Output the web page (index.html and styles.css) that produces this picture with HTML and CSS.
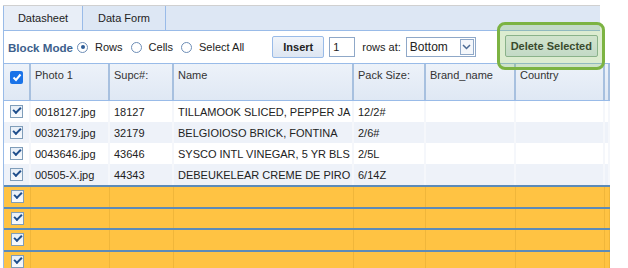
FILE: index.html
```html
<!DOCTYPE html>
<html>
<head>
<meta charset="utf-8">
<link rel="stylesheet" href="styles.css">
</head>
<body>
<div class="panel">
  <div class="tabs">
    <div class="tab active">Datasheet</div>
    <div class="tab">Data Form</div>
  </div>
  <div class="toolbar">
    <span class="mode">Block Mode</span>
    <label class="radio"><span class="rb on"></span>Rows</label>
    <label class="radio"><span class="rb"></span>Cells</label>
    <label class="radio"><span class="rb"></span>Select All</label>
    <button class="btn insert">Insert</button>
    <span class="num">1</span>
    <span class="lbl">rows at:</span>
    <span class="sel">Bottom<span class="arrow"><svg width="9" height="6" viewBox="0 0 9 6"><path d="M1 1 L4.5 4.5 L8 1" fill="none" stroke="#4a6a94" stroke-width="1.5"/></svg></span></span>
    <button class="btn del">Delete Selected</button>
  </div>
  <div class="grid">
    <div class="row head">
      <div class="c ck"><span class="hcb"><svg width="10" height="9" viewBox="0 0 10 9"><path d="M1.5 4.5 L4 7 L8.5 1.5" fill="none" stroke="#fff" stroke-width="2"/></svg></span></div>
      <div class="c photo">Photo 1</div>
      <div class="c supc">Supc#:</div>
      <div class="c name">Name</div>
      <div class="c pack">Pack Size:</div>
      <div class="c brand">Brand_name</div>
      <div class="c country">Country</div>
      <div class="c extra"></div>
    </div>
    <div class="row">
      <div class="c ck"><span class="cb"></span></div>
      <div class="c photo">0018127.jpg</div>
      <div class="c supc">18127</div>
      <div class="c name">TILLAMOOK SLICED, PEPPER JA</div>
      <div class="c pack">12/2#</div>
      <div class="c brand"></div>
      <div class="c country"></div>
      <div class="c extra"></div>
    </div>
    <div class="row alt">
      <div class="c ck"><span class="cb"></span></div>
      <div class="c photo">0032179.jpg</div>
      <div class="c supc">32179</div>
      <div class="c name">BELGIOIOSO BRICK, FONTINA</div>
      <div class="c pack">2/6#</div>
      <div class="c brand"></div>
      <div class="c country"></div>
      <div class="c extra"></div>
    </div>
    <div class="row">
      <div class="c ck"><span class="cb"></span></div>
      <div class="c photo">0043646.jpg</div>
      <div class="c supc">43646</div>
      <div class="c name">SYSCO INTL VINEGAR, 5 YR BLS</div>
      <div class="c pack">2/5L</div>
      <div class="c brand"></div>
      <div class="c country"></div>
      <div class="c extra"></div>
    </div>
    <div class="row alt">
      <div class="c ck"><span class="cb"></span></div>
      <div class="c photo">00505-X.jpg</div>
      <div class="c supc">44343</div>
      <div class="c name">DEBEUKELEAR CREME DE PIRO</div>
      <div class="c pack">6/14Z</div>
      <div class="c brand"></div>
      <div class="c country"></div>
      <div class="c extra"></div>
    </div>
    <div class="row new"><div class="c ck"><span class="cb"></span></div><div class="c photo"></div><div class="c supc"></div><div class="c name"></div><div class="c pack"></div><div class="c brand"></div><div class="c country"></div><div class="c extra"></div></div>
    <div class="row new"><div class="c ck"><span class="cb"></span></div><div class="c photo"></div><div class="c supc"></div><div class="c name"></div><div class="c pack"></div><div class="c brand"></div><div class="c country"></div><div class="c extra"></div></div>
    <div class="row new"><div class="c ck"><span class="cb"></span></div><div class="c photo"></div><div class="c supc"></div><div class="c name"></div><div class="c pack"></div><div class="c brand"></div><div class="c country"></div><div class="c extra"></div></div>
    <div class="row new"><div class="c ck"><span class="cb"></span></div><div class="c photo"></div><div class="c supc"></div><div class="c name"></div><div class="c pack"></div><div class="c brand"></div><div class="c country"></div><div class="c extra"></div></div>
  </div>
</div>
<div class="highlight"></div>
</body>
</html>
```
FILE: styles.css
```css
html, body { margin: 0; padding: 0; background: #fff; }
body { font-family: "Liberation Sans", Arial, sans-serif; font-size: 11px; color: #222; overflow: hidden; height: 268px; position: relative; }
.panel { margin: 5px 0 0 3px; width: 607px; }
.tabs { display: flex; height: 24px; background: #dde7f4; border-top: 1px solid #d0d0d0; border-bottom: 1px solid #99bbe8; width: 597px; }
.tab { width: 78px; border-right: 1px solid #99bbe8; display: flex; align-items: center; justify-content: center; color: #222; }
.tab.active { background: #e8eef7; border-left: 1px solid #99bbe8; }
.tab + .tab { width: 82px; }
.toolbar { display: flex; align-items: center; height: 32px; border-left: 1px solid #99bbe8; padding-left: 4px; }
.mode { font-weight: bold; color: #3d5f8c; font-size: 11.6px; margin-right: 4px; }
.radio { display: flex; align-items: center; margin-right: 8px; color: #222; }
.rb { width: 9px; height: 9px; border: 1px solid #6d8db6; border-radius: 50%; margin-right: 7px; position: relative; background: #fff; }
.rb.on::after { content: ""; position: absolute; left: 2.5px; top: 2.5px; width: 4px; height: 4px; border-radius: 50%; background: #2e5c96; }
.btn { font-family: "Liberation Sans", Arial, sans-serif; font-size: 11px; font-weight: bold; color: #222; border: 1px solid #99bbe8; border-radius: 2px; background: linear-gradient(#f0f4fa, #dde6f2); height: 22px; padding: 0; }
.insert { width: 52px; margin-left: 20px; }
.num { border: 1px solid #8fa8c8; margin-left: 5px; display: flex; align-items: center; padding-left: 3px; box-sizing: border-box; width: 26px; height: 20px; }
.lbl { margin-left: 7px; }
.sel { margin-left: 5px; width: 70px; height: 20px; border: 1px solid #8fa8c8; box-sizing: border-box; display: flex; align-items: center; padding-left: 3px; font-size: 12px; position: relative; }
.arrow { position: absolute; right: 1px; top: 1px; width: 14px; height: 16px; border: 1px solid #8fa8c8; box-sizing: border-box; display: flex; align-items: center; justify-content: center; background: #f4f7fb; }
.del { width: 93px; margin-left: 29px; margin-top: -2px; border-color: #8fb0a0; }
.highlight { position: absolute; left: 497px; top: 22px; width: 108px; height: 48px; box-sizing: border-box; border: 3px solid #7cb342; border-radius: 8px; background: rgba(125, 185, 80, 0.27); }
.grid { border-left: 1px solid #99bbe8; }
.row { display: flex; height: 21px; }
.c { box-sizing: border-box; padding: 0 4px; display: flex; align-items: center; white-space: nowrap; overflow: hidden; border-right: 2px solid #f5f7fb; }
.ck { width: 27px; justify-content: center; padding: 0; }
.photo { width: 79px; }
.supc { width: 64px; }
.name { width: 180px; }
.pack { width: 72px; }
.brand { width: 90px; }
.country { width: 89px; }
.extra { width: 5px; padding: 0; }
.head { height: 36px; background: linear-gradient(#edf2f9, #dfe8f4); border-top: 1px solid #99bbe8; border-bottom: 1px solid #99bbe8; }
.head .c { align-items: flex-start; padding-top: 5px; border-right: 2px solid #a7c0df; color: #333; }
.head .ck { align-items: flex-start; padding-top: 7px; }
.hcb { width: 13px; height: 13px; background: #1a73e8; border-radius: 2px; display: flex; align-items: center; justify-content: center; }
.alt { background: #eef2f9; }
.cb { width: 11px; height: 11px; border: 1px solid #7f9db9; background: linear-gradient(#e6eef7, #f8fafd); position: relative; }
.cb::after { content: ""; position: absolute; left: 2px; top: 1px; width: 6px; height: 3px; border-left: 2px solid #1f4e8c; border-bottom: 2px solid #1f4e8c; transform: rotate(-45deg); transform-origin: center; }
.new { background: #ffc343; border-top: 2px solid #5d8bb8; height: 21.5px; box-sizing: border-box; }
.new .c { border-right: 1px solid #f0b63a; }
```
